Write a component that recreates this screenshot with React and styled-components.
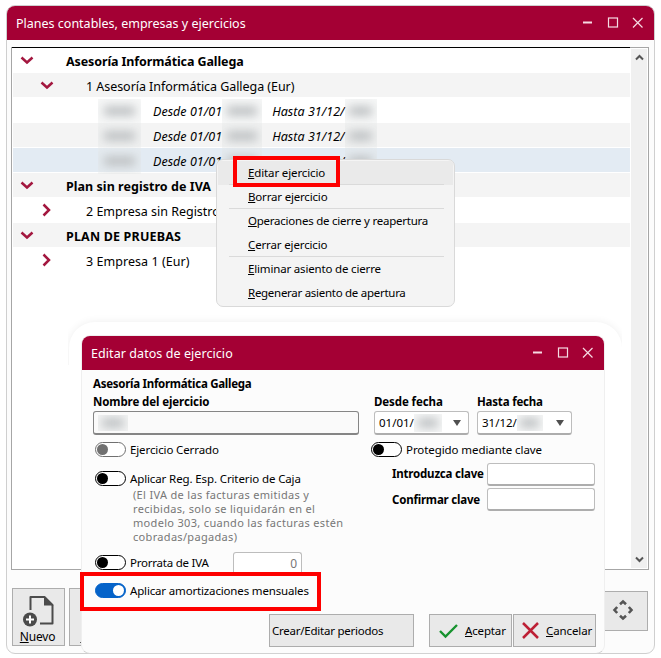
import React from 'react';
import styled, { createGlobalStyle, css } from 'styled-components';

const GlobalStyle = createGlobalStyle`
  * {
    box-sizing: border-box;
  }
  body {
    margin: 0;
    background: #fff;
    color: #000;
    font-family: "Noto Sans", "Open Sans", sans-serif;
    font-size: 12px;
  }
`;

const Desktop = styled.div`
  position: relative;
  width: 661px;
  height: 658px;
  overflow: hidden;
`;

const Window = styled.section`
  position: absolute;
  left: 6px;
  top: 5px;
  width: 649px;
  height: 649px;
  display: flex;
  flex-direction: column;
  background: #fcfcfc;
  border: 1px solid #cfcfcf;
  border-radius: 9px;
  overflow: hidden;
`;

const TitleBar = styled.header`
  flex: none;
  height: 34px;
  display: flex;
  align-items: center;
  justify-content: space-between;
  padding: 0 10px 0 9px;
  background: #a40034;
  color: #fff;
`;

const Controls = styled.svg`
  width: 62px;
  height: 16px;
  fill: none;
  stroke: #f6dbe3;
  stroke-width: 1.2;
`;

const Label = styled.span`
  white-space: nowrap;
  font-size: ${props => props.size || 12}px;
  letter-spacing: ${props => props.track || 0}px;
  ${props =>
    props.bold &&
    css`
      font-weight: 700;
    `}
`;

const List = styled.div`
  flex: none;
  display: flex;
  height: 523px;
  margin: 7px 5px 0 4px;
  background: #fff;
  border: 1px solid #a6a6a6;
`;

const Rows = styled.div`
  flex: 1;
  margin-top: -1px;
  padding-left: 1px;
  border-top: 1px solid #000;
`;

const Row = styled.div`
  display: flex;
  align-items: center;
  height: 25px;
  background: ${props => props.fill || '#fff'};
  border-bottom: 1px solid #fff;
  padding-left: ${props => props.indent || 0}px;
  padding-top: 2px;
`;

const Arrow = styled.svg`
  flex: none;
  width: 14px;
  height: 14px;
  margin: 0 ${props => props.gap}px 3px 0;
  fill: none;
  stroke: #a3173f;
  stroke-width: 2.5;
`;

const Period = styled.div`
  display: flex;
  align-items: center;
  height: 25px;
  padding-left: 85px;
  font-style: italic;
`;

const Mask = styled.span`
  flex: none;
  display: flex;
  align-items: center;
  justify-content: center;
  width: ${props => props.w}px;
  height: ${props => props.h || 25}px;
  margin-right: ${props => props.after || 0}px;
  background: rgba(228, 231, 232, 0.35);
  overflow: hidden;

  &::after {
    content: '';
    width: 74%;
    height: 10px;
    background: #bfc2c4;
    filter: blur(5px);
  }
`;

const ScrollBar = styled.div`
  width: 16px;
  margin: 1px;
  display: flex;
  flex-direction: column;
  justify-content: space-between;
  align-items: center;
  padding: 4px 0;
  background: #f0f0f0;
`;

const ScrollArrow = styled.svg`
  width: 9px;
  height: 9px;
  fill: none;
  stroke: #555;
  stroke-width: 2;
`;

const Toolbar = styled.div`
  display: flex;
  align-items: flex-start;
  gap: 4px;
  margin: 18px 6px 0 5px;
`;

const ToolButton = styled.div`
  width: 53px;
  height: 58px;
  display: flex;
  flex-direction: column;
  align-items: center;
  justify-content: space-between;
  padding: 5px 2px 0 ${props => props.shift || 0}px;
  border: 1px solid #adadad;
  background: #e9e9e9;
`;

const MoveButton = styled.div`
  width: 60px;
  height: 40px;
  margin: 3px 0 0 auto;
  display: flex;
  align-items: center;
  justify-content: flex-end;
  padding: 0 13px 2px 0;
  border: 1px solid #adadad;
  background: #e9e9e9;
`;

const Menu = styled.div`
  position: absolute;
  left: 216px;
  top: 159px;
  width: 239px;
  height: 148px;
  padding: 1px;
  border: 1px solid #d9d9d9;
  border-radius: 7px;
  background: #f4f4f4;
  overflow: hidden;
`;

const MenuItem = styled.div`
  display: flex;
  align-items: center;
  height: 24px;
  padding: 0 0 2px 30px;
  background: ${props => (props.active ? '#eaeaea' : 'transparent')};
`;

const Divider = styled.div`
  height: 1px;
  margin: -1px 9px 0 11px;
  background: #dadada;
`;

const Highlight = styled.div`
  position: absolute;
  left: ${props => props.x}px;
  top: ${props => props.y}px;
  width: ${props => props.w}px;
  height: ${props => props.h}px;
  border: 4px solid #fe0000;
`;

const Halo = styled.div`
  position: absolute;
  left: 68px;
  top: 315px;
  width: 554px;
  height: 50px;
  padding: 7px 0 0 1px;
  overflow: hidden;
`;

const HaloShape = styled.div`
  height: 70px;
  border-radius: 26px 26px 0 0;
  background: #fff;
  box-shadow: 0 0 9px rgba(0, 0, 0, 0.07);
`;

const Dialog = styled(Window)`
  left: 81px;
  top: 335px;
  width: 524px;
  height: 319px;
  border-color: #efefef;
  border-bottom-color: #d2d2d2;
`;

const Form = styled.div`
  flex: none;
  height: 244px;
  display: grid;
  grid-template-columns: 278px 1fr;
  padding: 4px 8px 0 11px;
`;

const Column = styled.div`
  display: flex;
  flex-direction: column;
`;

const Line = styled.div`
  flex: none;
  display: flex;
  align-items: center;
  width: ${props => (props.w ? props.w + 'px' : 'auto')};
  height: ${props => props.h}px;
  padding-left: ${props => props.indent || 0}px;
  margin-top: ${props => props.top || 0}px;
  gap: ${props => props.gap || 0}px;
`;

const Field = styled.div`
  flex: none;
  display: flex;
  align-items: center;
  width: ${props => props.w}px;
  height: ${props => props.h || 24}px;
  padding: 0 4px;
  border: 1px solid ${props => (props.strong ? '#858585' : '#bdbdbd')};
  border-bottom: 2px solid ${props => (props.strong ? '#858585' : '#adadad')};
  border-radius: 3px;
  background: ${props => (props.strong ? '#fafafa' : '#fff')};
`;

const Amount = styled(Field)`
  justify-content: flex-end;
  margin: 4px 69px 0 auto;
  color: #777;
`;

const Caret = styled.i`
  margin: 1px 3px 0 auto;
  border: 4.5px solid transparent;
  border-top: 6px solid #505050;
  border-bottom: 0;
`;

const Switch = styled.span`
  flex: none;
  display: flex;
  align-items: center;
  justify-content: ${props => (props.on ? 'flex-end' : 'flex-start')};
  width: 31px;
  height: 15px;
  padding: 0 1px;
  border: 1px solid ${props => props.tone};
  border-radius: 8px;
  background: ${props => (props.on ? props.tone : '#fff')};

  &::after {
    content: '';
    width: 11px;
    height: 11px;
    border-radius: 50%;
    background: ${props => (props.on ? '#fff' : props.tone)};
  }
`;

const Note = styled.p`
  margin: 2px 0 0 40px;
  font-size: 11px;
  line-height: 14px;
  letter-spacing: 0.32px;
  color: #777;
  white-space: pre;
`;

const Actions = styled.footer`
  display: flex;
  justify-content: flex-end;
  padding-right: 8px;
`;

const Button = styled.div`
  display: flex;
  align-items: center;
  width: ${props => props.w}px;
  height: 33px;
  padding: 0 0 0 ${props => props.pad || 2}px;
  margin-right: ${props => props.after || 0}px;
  border: 1px solid #adadad;
  background: #e9e9e9;

  svg {
    flex: none;
    margin-right: 7px;
  }
`;

const WindowControls = () => (
  <Controls viewBox="0 0 62 16">
    <path d="M1 7.5h9" strokeWidth="2" />
    <rect x="26.5" y="3" width="9" height="9" />
    <path d="M51 3l9.5 9.5M60.5 3L51 12.5" />
  </Controls>
);

const Chevron = ({ open, gap }) => (
  <Arrow viewBox="0 0 14 14" gap={gap}>
    <path d={open ? 'M1.5 4.5L7 9.5l5.5-5' : 'M3.5 1.5L9 7l-5.5 5.5'} />
  </Arrow>
);

const NewFileIcon = () => (
  <svg width="34" height="34" viewBox="0 0 34 34" fill="none" strokeLinejoin="round">
    <path d="M9.5 16V3h14l8 8v18.5H19" stroke="#4b4b4b" strokeWidth="2" />
    <path d="M23 2l9.5 9.5H23z" fill="#4b4b4b" />
    <circle cx="9" cy="25.5" r="7" fill="#4b4b4b" />
    <path d="M5 25.5h8M9 21.5v8" stroke="#fff" strokeWidth="2" />
  </svg>
);

const MoveIcon = () => (
  <svg width="22" height="22" viewBox="0 0 22 22" fill="none" stroke="#555" strokeWidth="2.6">
    <path d="M8 5.2l3-2.7 3 2.7M8 16.8l3 2.7 3-2.7M5.2 8l-2.7 3 2.7 3M16.8 8l2.7 3-2.7 3" />
  </svg>
);

const periods = ['#fff', '#f4f4f4', '#e3ebf3'];

const menu = [
  { text: 'Editar ejercicio', track: -0.13, active: true, line: true },
  { text: 'Borrar ejercicio', track: -0.18, line: true },
  { text: 'Operaciones de cierre y reapertura', track: -0.24 },
  { text: 'Cerrar ejercicio', track: -0.14, line: true },
  { text: 'Eliminar asiento de cierre', track: -0.17 },
  { text: 'Regenerar asiento de apertura', track: -0.28 },
];

// First letter is the keyboard shortcut
const Shortcut = ({ text, ...rest }) => (
  <Label {...rest}>
    <u>{text[0]}</u>
    {text.slice(1)}
  </Label>
);

function App() {
  return (
    <>
      <GlobalStyle />
      <Desktop>
        <Window>
          <TitleBar>
            <Label size={12.5}>Planes contables, empresas y ejercicios</Label>
            <WindowControls />
          </TitleBar>
          <List>
            <Rows>
              <Row indent={7}>
                <Chevron open gap={32} />
                <Label bold size={12.5} track={-0.11}>Asesoría Informática Gallega</Label>
              </Row>
              <Row indent={27} fill="#f4f4f4">
                <Chevron open gap={32} />
                <Label size={12.5} track={-0.05}>1 Asesoría Informática Gallega (Eur)</Label>
              </Row>
              {periods.map(fill => (
                <Row key={fill} fill={fill}>
                  <Period>
                    <Mask w={43} after={12} />
                    <Label size={12.5} track={0.04}>Desde 01/01</Label>
                    <Mask w={40} after={10} />
                    <Label size={12.5} track={0.04}>Hasta 31/12/</Label>
                    <Mask w={32} />
                  </Period>
                </Row>
              ))}
              <Row indent={7} fill="#f4f4f4">
                <Chevron open gap={32} />
                <Label bold size={12.5} track={0.04}>Plan sin registro de IVA</Label>
              </Row>
              <Row indent={27}>
                <Chevron gap={32} />
                <Label size={12.5}>2 Empresa sin Registro</Label>
              </Row>
              <Row indent={7} fill="#f4f4f4">
                <Chevron open gap={32} />
                <Label bold size={12.5} track={0.17}>PLAN DE PRUEBAS</Label>
              </Row>
              <Row indent={27}>
                <Chevron gap={32} />
                <Label size={12.5} track={0.05}>3 Empresa 1 (Eur)</Label>
              </Row>
            </Rows>
            <ScrollBar>
              <ScrollArrow viewBox="0 0 9 9"><path d="M1 6.5L4.5 3 8 6.5" /></ScrollArrow>
              <ScrollArrow viewBox="0 0 9 9"><path d="M1 2.5L4.5 6 8 2.5" /></ScrollArrow>
            </ScrollBar>
          </List>
          <Toolbar>
            <ToolButton>
              <NewFileIcon />
              <Shortcut text="Nuevo" track={-0.2} />
            </ToolButton>
            <ToolButton shift={5}>
              <span />
              <Shortcut text="Editar" />
            </ToolButton>
            <MoveButton><MoveIcon /></MoveButton>
          </Toolbar>
        </Window>

        <Menu>
          {menu.map(item => (
            <React.Fragment key={item.text}>
              <MenuItem active={item.active}>
                <Shortcut size={11.5} track={item.track} text={item.text} />
              </MenuItem>
              {item.line && <Divider />}
            </React.Fragment>
          ))}
        </Menu>
        <Highlight x={233} y={156} w={107} h={31} />

        <Halo><HaloShape /></Halo>
        <Dialog>
          <TitleBar>
            <Label size={12.5} track={0.07}>Editar datos de ejercicio</Label>
            <WindowControls />
          </TitleBar>
          <Form>
            <Column>
              <Line h={18}><Label bold size={11.5} track={-0.28}>Asesoría Informática Gallega</Label></Line>
              <Line h={19}><Label bold size={11.5} track={-0.1}>Nombre del ejercicio</Label></Line>
              <Line h={24}>
                <Field w={266} strong><Mask w={30} h={16} /></Field>
              </Line>
              <Line h={15} top={7} indent={2} gap={4}>
                <Switch tone="#707070" />
                <Label size={11.5} track={-0.12}>Ejercicio Cerrado</Label>
              </Line>
              <Line h={15} top={14} indent={2} gap={4}>
                <Switch tone="#000" />
                <Label size={11.5} track={-0.12}>Aplicar Reg. Esp. Criterio de Caja</Label>
              </Line>
              <Note>
                {'(El IVA de las facturas emitidas y\nrecibidas, solo se liquidarán en el\nmodelo 303, cuando las facturas estén\ncobradas/pagadas)'}
              </Note>
              <Line h={24} top={6} indent={2} gap={4}>
                <Switch tone="#000" />
                <Label size={11.5} track={-0.23}>Prorrata de IVA</Label>
                <Amount w={69} h={24}>0</Amount>
              </Line>
              <Line h={16} top={8} indent={2} gap={4}>
                <Switch tone="#0563c9" on />
                <Label size={11.5} track={-0.16}>Aplicar amortizaciones mensuales</Label>
              </Line>
            </Column>
            <Column>
              <Line h={19} top={18} indent={3}>
                <Line w={103} h={19}><Label bold size={11.5} track={-0.1}>Desde fecha</Label></Line>
                <Label bold size={11.5} track={-0.2}>Hasta fecha</Label>
              </Line>
              <Line h={24} indent={3} gap={8}>
                <Field w={95}>
                  <Label size={11.5}>01/01/</Label>
                  <Mask w={28} h={18} />
                  <Caret />
                </Field>
                <Field w={95}>
                  <Label size={11.5}>31/12/</Label>
                  <Mask w={26} h={16} />
                  <Caret />
                </Field>
              </Line>
              <Line h={15} top={7} gap={4}>
                <Switch tone="#000" />
                <Label size={11.5} track={-0.08}>Protegido mediante clave</Label>
              </Line>
              <Line h={23} top={6} indent={21}>
                <Line w={95} h={20} top={-3}><Label bold size={11.5} track={-0.2}>Introduzca clave</Label></Line>
                <Field w={108} h={23} />
              </Line>
              <Line h={23} top={2} indent={21}>
                <Line w={95} h={23}><Label bold size={11.5} track={-0.2}>Confirmar clave</Label></Line>
                <Field w={108} h={23} />
              </Line>
            </Column>
          </Form>
          <Actions>
            <Button w={145} after={15}>
              <Label size={11.5} track={-0.24}>Crear/Editar periodos</Label>
            </Button>
            <Button w={83} pad={9} after={1}>
              <svg width="19" height="16" viewBox="0 0 19 16" fill="none" stroke="#17932f" strokeWidth="2.4">
                <path d="M1 8l5.5 5.5L18 2" />
              </svg>
              <Shortcut size={11.5} track={-0.15} text="Aceptar" />
            </Button>
            <Button w={83} pad={8}>
              <svg width="17" height="17" viewBox="0 0 17 17" fill="none" stroke="#bd2136" strokeWidth="2.5">
                <path d="M1 1l15 15M16 1L1 16" />
              </svg>
              <Shortcut size={11.5} track={-0.1} text="Cancelar" />
            </Button>
          </Actions>
        </Dialog>
        <Highlight x={80} y={572} w={241} h={39} />
      </Desktop>
    </>
  );
}

export default App;
